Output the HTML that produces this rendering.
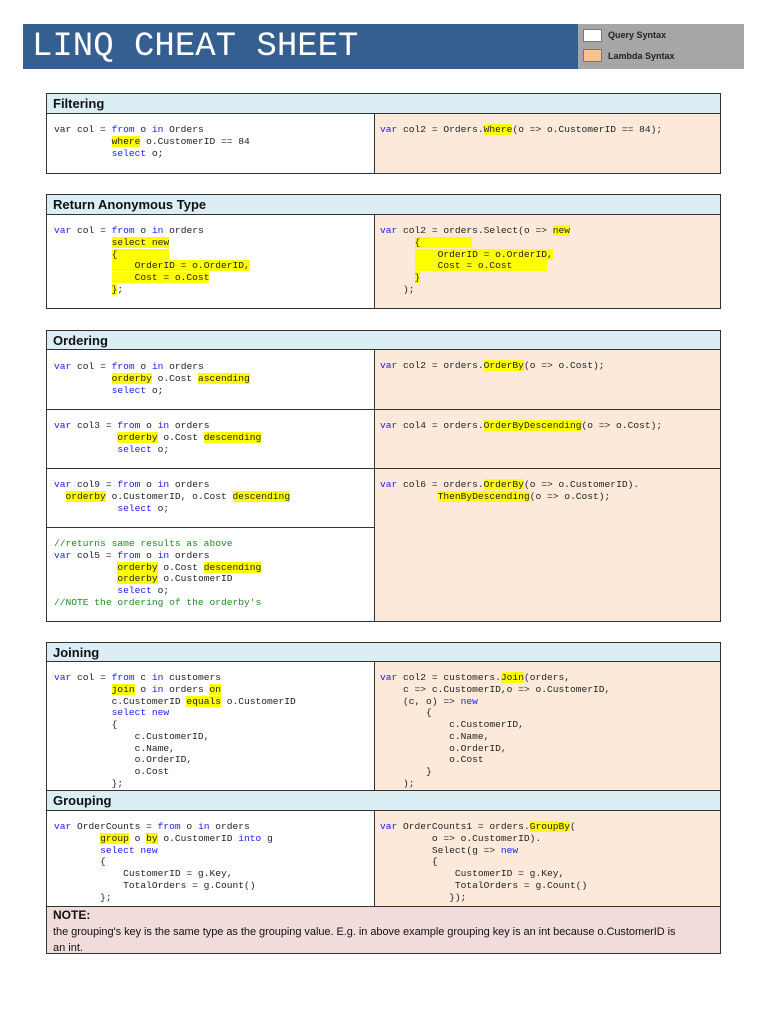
<!DOCTYPE html>
<html><head><meta charset="utf-8"><style>
body{margin:0;width:768px;height:1024px;background:#fff;position:relative;overflow:hidden;font-family:"Liberation Sans",sans-serif}
.a{position:absolute;box-sizing:border-box}
.hd{background:#dbeef3;border:1px solid #333;font-weight:bold;font-size:13px;padding:2px 0 0 6px;color:#111}
.w{background:#fff;border:1px solid #333}
.p{background:#fde9d9;border:1px solid #333}
pre{position:absolute;margin:0;font-family:"Liberation Mono",monospace;font-size:9.6px;line-height:11.75px;color:#222}
.k{color:#1a1aff}.h{background:#ffff00}.c{color:#228b22}
</style></head><body>
<div class="a" style="left:23px;top:24px;width:555px;height:45px;background:#365f91"></div>
<div class="a" style="left:578px;top:24px;width:166px;height:45px;background:#a6a6a6"></div>
<div class="a" style="left:32px;top:26px;color:#fff;font-family:'Liberation Mono',monospace;font-size:34px;line-height:42px">LINQ CHEAT SHEET</div>
<div class="a" style="left:583px;top:29px;width:19px;height:13px;background:#fff;border:1px solid #777"></div>
<div class="a" style="left:583px;top:49px;width:19px;height:13px;background:#fac090;border:1px solid #777"></div>
<div class="a" style="left:608px;top:30px;font-size:9px;font-weight:bold;color:#222">Query Syntax</div>
<div class="a" style="left:608px;top:51px;font-size:9px;font-weight:bold;color:#222">Lambda Syntax</div>

<!-- Filtering -->
<div class="a hd" style="left:46px;top:93px;width:675px;height:21px">Filtering</div>
<div class="a w" style="left:46px;top:113px;width:329px;height:61px"></div>
<div class="a p" style="left:374px;top:113px;width:347px;height:61px"></div>
<pre style="left:54px;top:124px">var col = <span class="k">from</span> o <span class="k">in</span> Orders
          <span class="h">where</span> o.CustomerID == 84
          <span class="k">select</span> o;</pre>
<pre style="left:380px;top:124px"><span class="k">var</span> col2 = Orders.<span class="h">Where</span>(o =&gt; o.CustomerID == 84);</pre>

<!-- Anon -->
<div class="a hd" style="left:46px;top:194px;width:675px;height:21px">Return Anonymous Type</div>
<div class="a w" style="left:46px;top:214px;width:329px;height:95px"></div>
<div class="a p" style="left:374px;top:214px;width:347px;height:95px"></div>
<pre style="left:54px;top:225px"><span class="k">var</span> col = <span class="k">from</span> o <span class="k">in</span> orders
          <span class="h">select new</span>
          <span class="h">{         </span>
          <span class="h">    OrderID = o.OrderID,</span>
          <span class="h">    Cost = o.Cost</span>
          <span class="h">}</span>;</pre>
<pre style="left:380px;top:225px"><span class="k">var</span> col2 = orders.Select(o =&gt; <span class="h">new</span>
      <span class="h">{         </span>
      <span class="h">    OrderID = o.OrderID,</span>
      <span class="h">    Cost = o.Cost      </span>
      <span class="h">}</span>
    );</pre>

<!-- Ordering -->
<div class="a hd" style="left:46px;top:330px;width:675px;height:20px">Ordering</div>
<div class="a w" style="left:46px;top:349px;width:329px;height:61px"></div>
<div class="a p" style="left:374px;top:349px;width:347px;height:61px"></div>
<div class="a w" style="left:46px;top:409px;width:329px;height:60px"></div>
<div class="a p" style="left:374px;top:409px;width:347px;height:60px"></div>
<div class="a w" style="left:46px;top:468px;width:329px;height:60px"></div>
<div class="a w" style="left:46px;top:527px;width:329px;height:95px"></div>
<div class="a p" style="left:374px;top:468px;width:347px;height:154px"></div>
<pre style="left:54px;top:361px"><span class="k">var</span> col = <span class="k">from</span> o <span class="k">in</span> orders
          <span class="h">orderby</span> o.Cost <span class="h">ascending</span>
          <span class="k">select</span> o;</pre>
<pre style="left:380px;top:360px"><span class="k">var</span> col2 = orders.<span class="h">OrderBy</span>(o =&gt; o.Cost);</pre>
<pre style="left:54px;top:420px"><span class="k">var</span> col3 = <span class="k">from</span> o <span class="k">in</span> orders
           <span class="h">orderby</span> o.Cost <span class="h">descending</span>
           <span class="k">select</span> o;</pre>
<pre style="left:380px;top:420px"><span class="k">var</span> col4 = orders.<span class="h">OrderByDescending</span>(o =&gt; o.Cost);</pre>
<pre style="left:54px;top:479px"><span class="k">var</span> col9 = <span class="k">from</span> o <span class="k">in</span> orders
  <span class="h">orderby</span> o.CustomerID, o.Cost <span class="h">descending</span>
           <span class="k">select</span> o;</pre>
<pre style="left:380px;top:479px"><span class="k">var</span> col6 = orders.<span class="h">OrderBy</span>(o =&gt; o.CustomerID).
          <span class="h">ThenByDescending</span>(o =&gt; o.Cost);</pre>
<pre style="left:54px;top:538px"><span class="c">//returns same results as above</span>
<span class="k">var</span> col5 = <span class="k">from</span> o <span class="k">in</span> orders
           <span class="h">orderby</span> o.Cost <span class="h">descending</span>
           <span class="h">orderby</span> o.CustomerID
           <span class="k">select</span> o;
<span class="c">//NOTE the ordering of the orderby's</span></pre>

<!-- Joining -->
<div class="a hd" style="left:46px;top:642px;width:675px;height:20px">Joining</div>
<div class="a w" style="left:46px;top:661px;width:329px;height:130px"></div>
<div class="a p" style="left:374px;top:661px;width:347px;height:130px"></div>
<pre style="left:54px;top:672px"><span class="k">var</span> col = <span class="k">from</span> c <span class="k">in</span> customers
          <span class="h">join</span> o <span class="k">in</span> orders <span class="h">on</span>
          c.CustomerID <span class="h">equals</span> o.CustomerID
          <span class="k">select new</span>
          {
              c.CustomerID,
              c.Name,
              o.OrderID,
              o.Cost
          };</pre>
<pre style="left:380px;top:672px"><span class="k">var</span> col2 = customers.<span class="h">Join</span>(orders,
    c =&gt; c.CustomerID,o =&gt; o.CustomerID,
    (c, o) =&gt; <span class="k">new</span>
        {
            c.CustomerID,
            c.Name,
            o.OrderID,
            o.Cost
        }
    );</pre>

<!-- Grouping -->
<div class="a hd" style="left:46px;top:790px;width:675px;height:21px">Grouping</div>
<div class="a w" style="left:46px;top:810px;width:329px;height:97px"></div>
<div class="a p" style="left:374px;top:810px;width:347px;height:97px"></div>
<pre style="left:54px;top:821px"><span class="k">var</span> OrderCounts = <span class="k">from</span> o <span class="k">in</span> orders
        <span class="h">group</span> o <span class="h">by</span> o.CustomerID <span class="k">into</span> g
        <span class="k">select new</span>
        {
            CustomerID = g.Key,
            TotalOrders = g.Count()
        };</pre>
<pre style="left:380px;top:821px"><span class="k">var</span> OrderCounts1 = orders.<span class="h">GroupBy</span>(
         o =&gt; o.CustomerID).
         Select(g =&gt; <span class="k">new</span>
         {
             CustomerID = g.Key,
             TotalOrders = g.Count()
            });</pre>

<div class="a" style="left:46px;top:906px;width:675px;height:48px;background:#f2dcdb;border:1px solid #333;font-size:11px;color:#111;padding:0 0 0 6px;line-height:16px">
<b style="font-size:12px">NOTE:</b><br><span style="white-space:nowrap;letter-spacing:-0.05px">the grouping's key is the same type as the grouping value. E.g. in above example grouping key is an int because o.CustomerID is</span><br>an int.</div>
</body></html>
